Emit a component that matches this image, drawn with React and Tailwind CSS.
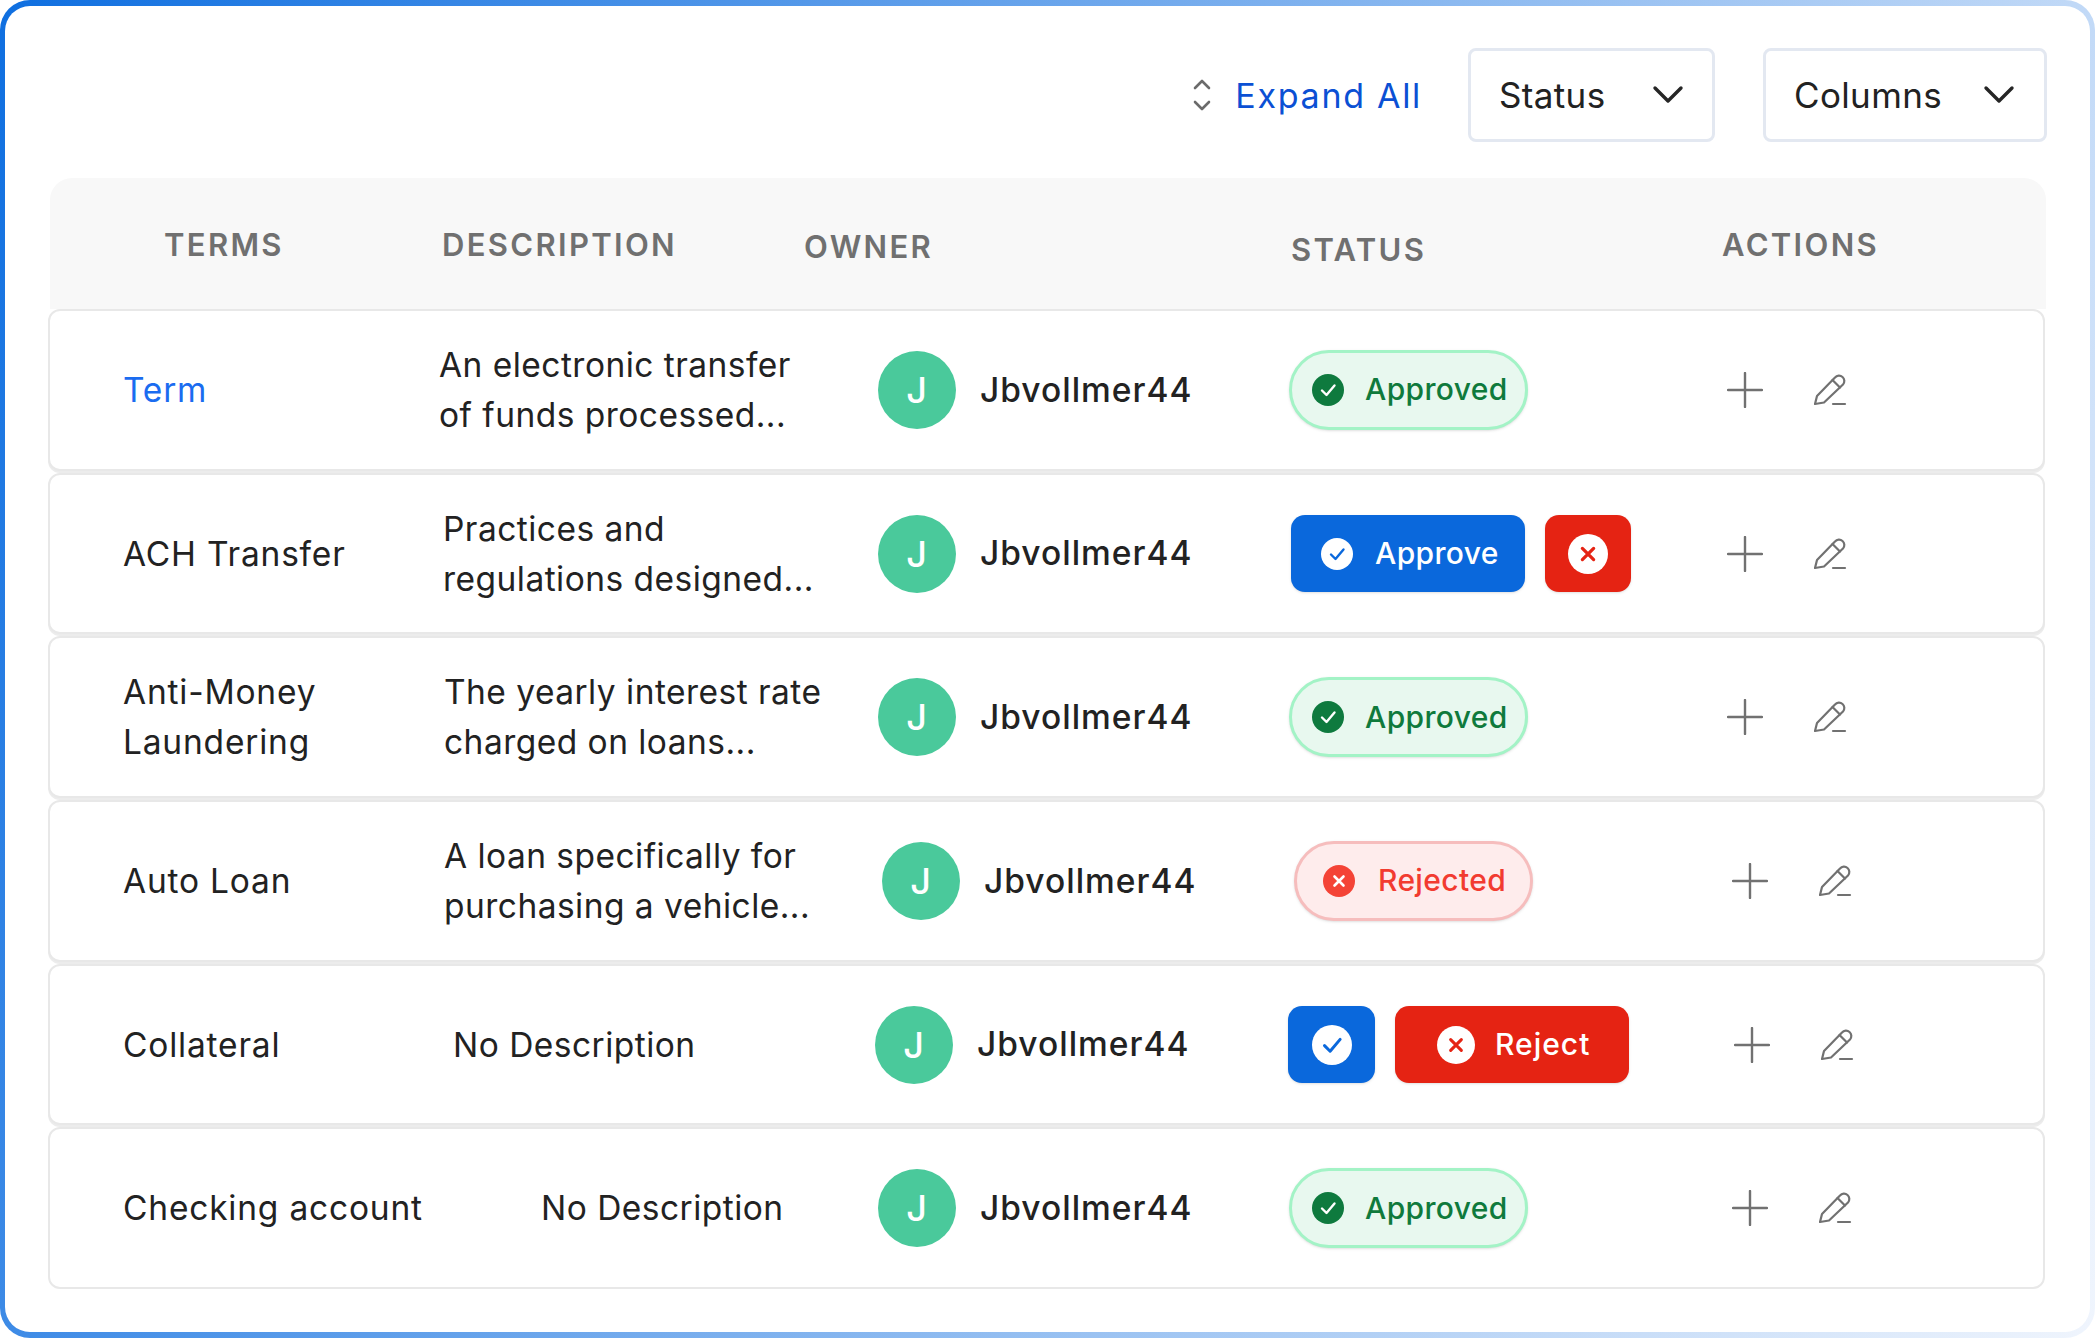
import React from "react";

const rows = [
  { term: "Term", termClass: "text-[#1a6cf0]", desc: ["An electronic transfer", "of funds processed..."], status: "approved",
    cols: ["w-[316px]", "w-[439px]", "w-[411px]", "w-[438px]"] },
  { term: "ACH Transfer", desc: ["Practices and", "regulations designed..."], status: "approve",
    cols: ["w-[320px]", "w-[435px]", "w-[413px]", "w-[436px]"] },
  { term: "Anti-Money Laundering", desc: ["The yearly interest rate", "charged on loans..."], status: "approved",
    cols: ["w-[321px]", "w-[434px]", "w-[411px]", "w-[438px]"] },
  { term: "Auto Loan", desc: ["A loan specifically for", "purchasing a vehicle..."], status: "rejected",
    cols: ["w-[321px]", "w-[438px]", "w-[412px]", "w-[438px]"] },
  { term: "Collateral", desc: ["No Description"], status: "reject",
    cols: ["w-[330px]", "w-[422px]", "w-[413px]", "w-[446px]"] },
  { term: "Checking account", desc: ["No Description"], status: "approved",
    cols: ["w-[418px]", "w-[337px]", "w-[411px]", "w-[443px]"] },
];

const Chevron = ({ className }) => (
  <svg viewBox="0 0 32 20" className={className} fill="none" stroke="#262626" strokeWidth="3.4" strokeLinecap="round" strokeLinejoin="round">
    <path d="M3 3 L16 16 L29 3" />
  </svg>
);

const CheckCircle = ({ bg, tick, className }) => (
  <svg viewBox="0 0 32 32" className={className}>
    <circle cx="16" cy="16" r="16" fill={bg} />
    <path d="M10 16.5 L14.5 21 L22.5 11.5" fill="none" stroke={tick} strokeWidth="2.4" strokeLinecap="round" strokeLinejoin="round" />
  </svg>
);

const XCircle = ({ bg, mark, className }) => (
  <svg viewBox="0 0 32 32" className={className}>
    <circle cx="16" cy="16" r="16" fill={bg} />
    <path d="M11.5 11.5 L20.5 20.5 M20.5 11.5 L11.5 20.5" fill="none" stroke={mark} strokeWidth="2.6" strokeLinecap="round" />
  </svg>
);

const PlusIcon = () => (
  <svg viewBox="0 0 36 36" className="w-[36px] h-[36px]" fill="none" stroke="#717171" strokeWidth="2.4" strokeLinecap="round">
    <path d="M18 1 V35 M1 18 H35" />
  </svg>
);

const PencilIcon = () => (
  <svg viewBox="0 0 34 34" className="w-[34px] h-[34px]" fill="none" stroke="#717171" strokeWidth="2.2" strokeLinecap="round" strokeLinejoin="round">
    <path d="M2 31 L4 23 L22 4.5 A5 5 0 0 1 30 11.5 L11 29.5 Z" />
    <path d="M19.5 7 L27 14.5" />
    <path d="M20 31 H32" />
  </svg>
);

const StatusCell = ({ status }) => {
  if (status === "approved") {
    return (
      <div className="flex items-center w-[239px] h-[80px] pl-[20px] rounded-full bg-[#e8f8ef] border-[3px] border-[#a3f3c6] shadow-sm">
        <CheckCircle bg="#0e7a3e" tick="#ffffff" className="w-[32px] h-[32px]" />
        <span className="ml-[21px] text-[30px] tracking-[0.012em] font-medium text-[#0f7a3c]">Approved</span>
      </div>
    );
  }
  if (status === "rejected") {
    return (
      <div className="flex items-center w-[239px] h-[80px] pl-[26px] rounded-full bg-[#feecec] border-[3px] border-[#f6bdbd] shadow-sm">
        <XCircle bg="#f44336" mark="#ffffff" className="w-[32px] h-[32px]" />
        <span className="ml-[23px] text-[30px] tracking-[0.012em] font-medium text-[#f23b30]">Rejected</span>
      </div>
    );
  }
  if (status === "approve") {
    return (
      <div className="flex items-center gap-[20px]">
        <div className="flex items-center w-[234px] h-[77px] pl-[30px] rounded-[14px] bg-[#0a68dc] shadow">
          <CheckCircle bg="#ffffff" tick="#0a68dc" className="w-[32px] h-[32px]" />
          <span className="ml-[22px] text-[30px] tracking-[0.012em] font-medium text-white">Approve</span>
        </div>
        <div className="flex items-center justify-center w-[86px] h-[77px] rounded-[14px] bg-[#e52313] shadow">
          <XCircle bg="#ffffff" mark="#e52313" className="w-[40px] h-[40px]" />
        </div>
      </div>
    );
  }
  return (
    <div className="flex items-center gap-[20px]">
      <div className="flex items-center justify-center w-[87px] h-[77px] rounded-[14px] bg-[#0a68dc] shadow">
        <CheckCircle bg="#ffffff" tick="#0a68dc" className="w-[40px] h-[40px]" />
      </div>
      <div className="flex items-center w-[234px] h-[77px] pl-[42px] rounded-[14px] bg-[#e52313] shadow">
        <XCircle bg="#ffffff" mark="#e52313" className="w-[38px] h-[38px]" />
        <span className="ml-[20px] text-[30px] font-medium text-white">Reject</span>
      </div>
    </div>
  );
};

const headers = [
  { label: "TERMS", cls: "w-[278px] translate-y-[2px]" },
  { label: "DESCRIPTION", cls: "w-[362px] translate-y-[2px]" },
  { label: "OWNER", cls: "w-[487px] translate-y-[4px]" },
  { label: "STATUS", cls: "w-[431px] translate-y-[7px]" },
  { label: "ACTIONS", cls: "w-[300px] translate-y-[2px]" },
];

export default function App() {
  return (
    <div className="w-[2095px] h-[1338px] bg-white font-['Inter',sans-serif] text-[#222222]">
      <div className="h-full pt-[6px] pb-[6px] px-[5px] rounded-[30px] bg-[linear-gradient(112deg,#0f6fe0,#f0f5fd)]">
        <div className="h-full bg-white rounded-[25px] pt-[42px] pl-[43px] pr-[43px]">
          {/* toolbar */}
          <div className="flex items-center justify-end h-[94px]">
            <svg viewBox="0 0 22 36" className="w-[22px] h-[36px] mr-[22px]" fill="none" stroke="#6b6b6b" strokeWidth="2.6" strokeLinecap="round" strokeLinejoin="round">
              <path d="M4 11 L11 4 L18 11" />
              <path d="M4 25 L11 32 L18 25" />
            </svg>
            <span className="text-[34px] tracking-[0.05em] text-[#0b50d4] mr-[46px]">Expand All</span>
            <div className="flex items-center w-[247px] h-[94px] pl-[28px] border-[3px] border-[#e3e8f1] rounded-[8px]">
              <span className="text-[35px] tracking-[0.01em]">Status</span>
              <Chevron className="w-[32px] h-[20px] ml-auto mr-[28px]" />
            </div>
            <div className="flex items-center w-[284px] h-[94px] pl-[28px] ml-[48px] border-[3px] border-[#e3e8f1] rounded-[8px]">
              <span className="text-[35px] tracking-[0.01em]">Columns</span>
              <Chevron className="w-[32px] h-[20px] ml-auto mr-[29px]" />
            </div>
          </div>

          {/* header */}
          <div className="flex items-center w-[1996px] h-[131px] ml-[2px] mt-[36px] pl-[114px] bg-[#f8f8f8] rounded-t-[22px]">
            {headers.map((h) => (
              <div key={h.label} className={`${h.cls} text-[31px] font-semibold tracking-[0.075em] text-[#707070]`}>
                {h.label}
              </div>
            ))}
          </div>

          {/* rows */}
          <div className="flex flex-col gap-[2px] w-[1997px]">
            {rows.map((row) => (
              <div key={row.term} className="flex items-center h-[161.7px] pl-[73px] border-2 border-[#e8e8e8] rounded-[12px] bg-white text-[33.5px] tracking-[0.03em] shadow-[0_2px_0_0_#ececec] last:shadow-none">
                <div className={`${row.cols[0]} pr-[30px] leading-[50px] tracking-[0.024em] ${row.termClass || ""}`}>{row.term}</div>
                <div className={`${row.cols[1]} leading-[50px] tracking-[0.014em]`}>
                  {row.desc.map((line) => (
                    <div key={line}>{line}</div>
                  ))}
                </div>
                <div className={`${row.cols[2]} flex items-center`}>
                  <div className="flex items-center justify-center w-[78px] h-[78px] rounded-full bg-[#4ac99b] text-white text-[36px] font-medium">J</div>
                  <span className="ml-[24px] font-medium">Jbvollmer44</span>
                </div>
                <div className={row.cols[3]}>
                  <StatusCell status={row.status} />
                </div>
                <div className="flex items-center gap-[50px]">
                  <PlusIcon />
                  <PencilIcon />
                </div>
              </div>
            ))}
          </div>
        </div>
      </div>
    </div>
  );
}
